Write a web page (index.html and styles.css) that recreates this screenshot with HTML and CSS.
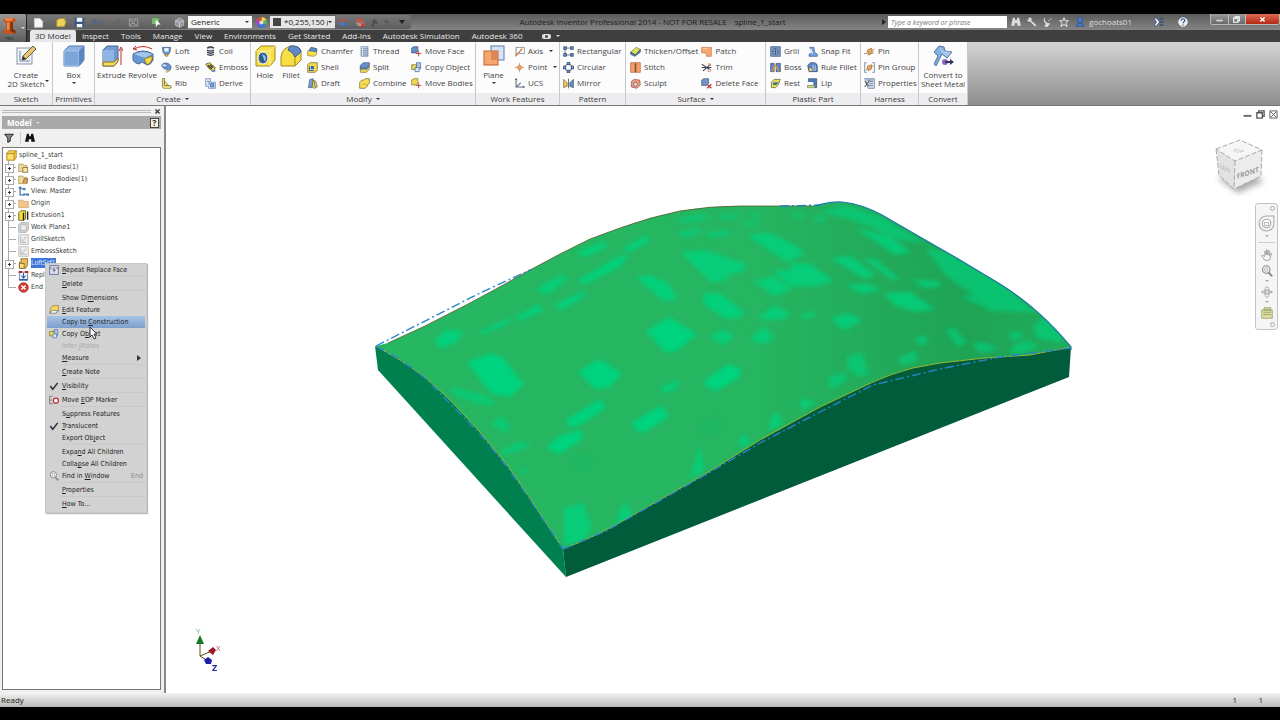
FILE: index.html
```html
<!DOCTYPE html>
<html lang="en">
<head>
<meta charset="utf-8">
<title>Autodesk Inventor Professional 2014 - spline_1_start</title>
<link rel="stylesheet" href="styles.css">
</head>
<body>
<svg class="sprite" aria-hidden="true">
  <symbol id="sketch" viewBox="0 0 22 22"><rect x="2" y="3" width="15" height="16" fill="#f1f3f8" stroke="#8995a8"/><path d="M5 16V6M5 16h10" stroke="#7382a0" fill="none"/><path d="M7 15l1-4 10-10 3 3L11 14z" fill="#e8c66c" stroke="#5f5a50"/><path d="M7 15l1-4 3 3z" fill="#333"/></symbol>
  <symbol id="box" viewBox="0 0 22 22"><path d="M1 6l5-5h15v14l-5 6H1z" fill="#8fb4e2" stroke="#5878a8"/><path d="M1 6h15v15H1z" fill="#7ea5d8" stroke="#a9c6ec"/><path d="M16 6l5-5v14l-5 6z" fill="#5c86bf"/></symbol>
  <symbol id="extrude" viewBox="0 0 22 22"><path d="M2 5l4-4h11v15l-4 5H2z" fill="#6f9bd2" stroke="#4b6690"/><path d="M2 5h11v12H2z" fill="#8fb5e4"/><path d="M2 17h11l4-4v3l-4 5H2z" fill="#f5dc4e" stroke="#877530"/><path d="M20 20V4M18 6l2-4 2 4" stroke="#c52d2d" fill="none"/></symbol>
  <symbol id="revolve" viewBox="0 0 22 22"><path d="M1 9q10-6 20 0v6q-2 5-6 5l-5-3-3 2q-5-1-6-4z" fill="#6896d1" stroke="#4a6791"/><path d="M2 9q9-4 18 0l-7 4z" fill="#a4c5ee"/><path d="M12 14l8-3v4q-2 4-5 5z" fill="#f5dc4e" stroke="#877530"/><path d="M2 4q9-5 18 0M4 1L1 4l4 1" stroke="#c52d2d" fill="none"/></symbol>
  <symbol id="hole" viewBox="0 0 22 22"><path d="M2 6l5-5h14v14l-5 6H2z" fill="#f8de45" stroke="#a08724"/><path d="M2 6h14l5-5M16 6v15" stroke="#fff3a0" fill="none"/><ellipse cx="9" cy="13" rx="5" ry="6" fill="#315d8f" stroke="#fff"/><path d="M8 9q6 2 3 8" fill="#93c4e8"/></symbol>
  <symbol id="fillet" viewBox="0 0 22 22"><path d="M1 21V12Q2 3 11 1q9 0 10 5v9l-6 6z" fill="#f8de45" stroke="#a08724"/><path d="M10 1q10-1 11 6l-6 5Q13 7 8 5z" fill="#5c8bc8" stroke="#39608f"/><path d="M15 12v9" stroke="#a08724"/></symbol>
  <symbol id="plane" viewBox="0 0 22 22"><rect x="8" y="1" width="13" height="14" fill="#d7e4f7" stroke="#5d7cab"/><rect x="1" y="6" width="14" height="14" fill="#f6a66f" stroke="#bd6431"/><path d="M8 6h7v9H8z" fill="#dd8557"/></symbol>
  <symbol id="convert" viewBox="0 0 22 22"><path d="M2 7L7 1l5 1 1 4 7 1-5 6-5-4-6 12-2-2 4-8z" fill="#85b0de" stroke="#52769f"/><path d="M7 2l5 4 7 1-4 5-5-4z" fill="#a8c9ea"/><circle cx="13" cy="17" r="3" fill="#8969c2"/><path d="M13 16h5v-2l4 3-4 3v-2h-5z" fill="#333762"/></symbol>

  <symbol id="loft" viewBox="0 0 16 16"><path d="M2 2h12l-1 7-4 5H7L3 9z" fill="#6b97d2" stroke="#34527f"/><path d="M5 3h6v5H5z" fill="#eff4fb"/><path d="M5 12h6l-2 3H7z" fill="#f2d648" stroke="#7e6b22"/></symbol>
  <symbol id="sweep" viewBox="0 0 16 16"><path d="M1 5q4-6 11-2 5 4 1 9l-5 3 1-5Q4 12 1 5z" fill="#6b95d0" stroke="#3d5f92"/><ellipse cx="5" cy="5" rx="4" ry="2.500" fill="#c4daf5" stroke="#3d5f92"/><path d="M7 15l4-3" stroke="#e8cb43" stroke-width="2"/></symbol>
  <symbol id="rib" viewBox="0 0 16 16"><path d="M2 1l3-1v9l4 2h5l1 3-4 2H5l-3-3z" fill="#eedd7c" stroke="#6d6137"/><path d="M5 4l6 7H5z" fill="#f8e95a" stroke="#6d6137"/></symbol>
  <symbol id="coil" viewBox="0 0 16 16"><path d="M3 3q5-3 10 0M3 6q5 3 10 0M3 9q5 3 10 0M3 12q5 3 10 0" fill="none" stroke="#343a43" stroke-width="2"/><path d="M3 3q5 3 10 0" fill="none" stroke="#8f98a5"/></symbol>
  <symbol id="emboss" viewBox="0 0 16 16"><path d="M1 3l6-2 8 7-3 6-7-5z" fill="#e8cf50" stroke="#555035"/><path d="M4 5l6 5M7 4l5 4" stroke="#333" stroke-width="2"/><path d="M9 14h6v-4" fill="#5d86c0"/></symbol>
  <symbol id="derive" viewBox="0 0 16 16"><path d="M1 1h7v5h7v9H5v-3H1z" fill="#dfeafa" stroke="#527bb0"/><path d="M8 8h5v5H8z" fill="#7ba4da" stroke="#3d659f"/><path d="M3 5h3v5" fill="none" stroke="#385f9b"/></symbol>
  <symbol id="chamfer" viewBox="0 0 16 16"><path d="M1 14V8l5-6 8 2v8l-4 3z" fill="#f7dd4b" stroke="#8d7826"/><path d="M6 2l8 2v4L3 7z" fill="#588dce" stroke="#335b90"/></symbol>
  <symbol id="shell" viewBox="0 0 16 16"><path d="M1 4l3-3h11v11l-3 3H1z" fill="#f1d94c" stroke="#665f29"/><path d="M3 6h7v7H3z" fill="#346097"/><path d="M5 6v5h5" fill="none" stroke="#fff"/></symbol>
  <symbol id="draft" viewBox="0 0 16 16"><path d="M2 14L4 2l5-1-2 13z" fill="#779ed6" stroke="#465d85"/><path d="M8 14V3l5 2 2 8-4 2z" fill="#ead567" stroke="#746836"/><path d="M10 3l2 11" stroke="#365882"/></symbol>
  <symbol id="thread" viewBox="0 0 16 16"><path d="M3 1h10v14H3z" fill="#cad6e8" stroke="#6980a4"/><path d="M3 4h10M3 7h10M3 10h10M3 13h10" stroke="#526c95"/><path d="M5 1v14" stroke="#fff"/></symbol>
  <symbol id="split" viewBox="0 0 16 16"><path d="M2 6l4-4h9v8l-4 5H2z" fill="#f1d953" stroke="#807032"/><path d="M2 5l4-4h9v3l-4 4H2z" fill="#6492d1" stroke="#3e609a"/><path d="M1 10h10l4-4" stroke="#3e609a" stroke-width="1.500" fill="none"/></symbol>
  <symbol id="combine" viewBox="0 0 16 16"><path d="M1 6l3-3h3l2-2h6v7l-3 2v2l-3 3H1z" fill="#f6de52" stroke="#6f622c"/><path d="M5 9h6" stroke="#ad9330"/></symbol>
  <symbol id="moveface" viewBox="0 0 16 16"><path d="M1 3l3-2h6v7l-3 2H1z" fill="#628ec7" stroke="#365078"/><path d="M11 7v8M7 11h8" stroke="#c54b4b" stroke-width="1.500"/></symbol>
  <symbol id="copyobj" viewBox="0 0 16 16"><path d="M8 1h6v9H8z" fill="#a9c5ea" stroke="#42679c"/><path d="M1 4h7v7H1z" fill="#f1da4e" stroke="#6f632b"/><path d="M6 8h6v6H6z" fill="#d9e7fa" stroke="#42679c"/></symbol>
  <symbol id="movebody" viewBox="0 0 16 16"><path d="M1 3l3-2h6v7l-3 2H1z" fill="#f1d84e" stroke="#7d6c29"/><path d="M11 7v8M7 11h8" stroke="#b55a4b" stroke-width="1.500"/></symbol>
  <symbol id="axis" viewBox="0 0 16 16"><path d="M3 2h12v9H5" fill="#fff" stroke="#66758c"/><path d="M2 15L12 4" stroke="#d48045" stroke-width="2"/><path d="M3 2v11" stroke="#555"/></symbol>
  <symbol id="point" viewBox="0 0 16 16"><path d="M8 1v14M1 8h14" stroke="#dd9159"/><path d="M8 4l4 4-4 4-4-4z" fill="#efa366" stroke="#b9662e"/></symbol>
  <symbol id="ucs" viewBox="0 0 16 16"><path d="M3 1v12h12M3 13l7-6" fill="none" stroke="#59677f" stroke-width="1.5"/><path d="M1 3l2-3 2 3M13 11l3 2-3 2" fill="#59677f"/></symbol>
  <symbol id="rect" viewBox="0 0 16 16"><path d="M3 3h10M3 3v10h10" fill="none" stroke="#444"/><path d="M1 1h4v4H1zM11 1h4v4h-4zM1 11h4v4H1zM11 11h4v4h-4z" fill="#6791ca" stroke="#293f63"/></symbol>
  <symbol id="circ" viewBox="0 0 16 16"><circle cx="8" cy="8" r="5" fill="none" stroke="#333"/><path d="M6 0h4v4H6zM0 6h4v4H0zM12 6h4v4h-4zM6 12h4v4H6z" fill="#6791ca" stroke="#293f63"/></symbol>
  <symbol id="mirror" viewBox="0 0 16 16"><path d="M1 2l5 5v5l-5 2z" fill="#e9c85d" stroke="#7a6435"/><path d="M15 2l-5 5v5l5 2z" fill="#6791ca" stroke="#2d486f"/><path d="M8 1v14" stroke="#333"/></symbol>
  <symbol id="thicken" viewBox="0 0 16 16"><path d="M1 9l8-7 6 3-7 8z" fill="#dde35c" stroke="#656e27"/><path d="M1 9l7 4 7-8v4l-8 6-6-3z" fill="#557fb2" stroke="#344c70"/></symbol>
  <symbol id="stitch" viewBox="0 0 16 16"><path d="M1 1h14v14H1z" fill="#f4a06b" stroke="#b65f34"/><path d="M8 1v14" stroke="#79411f"/><path d="M6 4h4M6 7h4M6 10h4M6 13h4" stroke="#79411f"/></symbol>
  <symbol id="sculpt" viewBox="0 0 16 16"><path d="M2 5l4-3 8 1 1 7-5 5-8-2z" fill="#ef9d7d" stroke="#9b473c"/><circle cx="8" cy="9" r="3" fill="#f8d3bd" stroke="#4b5d7c"/></symbol>
  <symbol id="patch" viewBox="0 0 16 16"><path d="M1 2h14v13H8q1-6-7-5z" fill="#f5a873" stroke="#c9743f"/><path d="M3 4h7" stroke="#ffe0c8"/></symbol>
  <symbol id="trim" viewBox="0 0 16 16"><path d="M1 3l13 9M3 13L14 3M1 8h14" stroke="#38404d" stroke-width="1.5"/><circle cx="12" cy="12" r="2" fill="#fff" stroke="#b54b36"/><path d="M9 2h5v4" fill="#e39560"/></symbol>
  <symbol id="delface" viewBox="0 0 16 16"><path d="M1 3l3-2h7v7l-3 3H1z" fill="#6f94c6" stroke="#405b87"/><path d="M9 9l6 6M15 9l-6 6" stroke="#c13a3a" stroke-width="2"/></symbol>
  <symbol id="grill" viewBox="0 0 16 16"><path d="M1 1h14v14H1z" fill="#7898c8" stroke="#385184"/><circle cx="8" cy="8" r="4" fill="#a2b7d8" stroke="#303d6b"/><path d="M5 8h6M8 4v8" stroke="#303d6b"/></symbol>
  <symbol id="boss" viewBox="0 0 16 16"><path d="M1 2h5v12H1zM9 2h6v12H9z" fill="#5d8bc9" stroke="#2d466b"/><path d="M3 14L7 4l3 4 3 6" fill="none" stroke="#d59b47" stroke-width="2"/></symbol>
  <symbol id="rest" viewBox="0 0 16 16"><path d="M2 6l4-4h9l-3 8-4 4H2z" fill="#e6df4d" stroke="#525d31"/><path d="M5 6h8l-4 4H4z" fill="#426fa4"/></symbol>
  <symbol id="snap" viewBox="0 0 16 16"><path d="M4 2h6l1 7 4 3v3H3v-3l4-2z" fill="#71a2df" stroke="#355987"/><path d="M5 4l3 7" stroke="#e6f2ff" stroke-width="2"/></symbol>
  <symbol id="rule" viewBox="0 0 16 16"><path d="M1 5l4-4h6q4 1 4 6v7H3z" fill="#5c88c5" stroke="#2d466b"/><path d="M3 13V8q4-1 5 5" fill="#f3e072" stroke="#665f29"/><path d="M9 4v9M12 5v8" stroke="#d8e5f7"/></symbol>
  <symbol id="lip" viewBox="0 0 16 16"><path d="M2 1h12v13H1v-3h9V5H2z" fill="#4c7dbf" stroke="#294a79"/><path d="M1 11h10v3H1z" fill="#d9db65"/></symbol>
  <symbol id="pin" viewBox="0 0 16 16"><path d="M0 11h4l3-6M10 10l5-6M5 13l9-3" fill="none" stroke="#77654e"/><path d="M5 6l6-3 1 6-5 4z" fill="#efa552" stroke="#a36d34"/></symbol>
  <symbol id="pingroup" viewBox="0 0 16 16"><path d="M4 1H1v14h3M12 1h3v14h-3" fill="none" stroke="#46628e"/><path d="M3 12l3-5M9 11l4-6" fill="none" stroke="#77654e"/><path d="M5 6l6-2v6l-5 3z" fill="#efa552" stroke="#a36d34"/></symbol>
  <symbol id="props" viewBox="0 0 16 16"><path d="M1 1h14v14H6z" fill="#d7e2f1" stroke="#506b94"/><path d="M4 3h9M6 5h7M8 8h5M8 11h5" stroke="#506b94"/><path d="M1 5l7 7M1 13l7-9" stroke="#5c5a57" stroke-width="1.500"/></symbol>

  <symbol id="new" viewBox="0 0 16 16"><path d="M2 2h8l4 4v9H2z" fill="#f5f5f5" stroke="#cfcfcf"/></symbol>
  <symbol id="open" viewBox="0 0 16 16"><path d="M1 5l4-3h8v4h2l-3 8H1z" fill="#ecd258" stroke="#aa8d2b"/></symbol>
  <symbol id="save" viewBox="0 0 16 16"><path d="M1 1h14v14H1z" fill="#3e587f"/><path d="M4 1h8v6H4zM4 10h8v5H4z" fill="#f2f6fb"/></symbol>
  <symbol id="undo" viewBox="0 0 16 16"><path d="M5 3L1 7l4 4M1 7h9q4 1 4 5" fill="none" stroke="#4e6581" stroke-width="2"/></symbol>
  <symbol id="redo" viewBox="0 0 16 16"><path d="M11 3l4 4-4 4M15 7H6q-4 1-4 5" fill="none" stroke="#666" stroke-width="2"/></symbol>
  <symbol id="update" viewBox="0 0 16 16"><path d="M2 3l11 10M3 12l9-9M2 3h12v10H2z" stroke="#9a9a9a" fill="none" stroke-width="1.500"/></symbol>
  <symbol id="select" viewBox="0 0 16 16"><path d="M1 1h11v10H1z" fill="#82b87c" stroke="#467940"/><path d="M7 4l7 7h-4l-3 4z" fill="#fff"/></symbol>
  <symbol id="cube" viewBox="0 0 16 16"><path d="M2 5l6-4 6 4v7l-6 3-6-3z" fill="#999" stroke="#ccc"/><path d="M2 5l6 3 6-3M8 8v7" stroke="#ddd" fill="none"/></symbol>
  <symbol id="wheel" viewBox="0 0 16 16"><path d="M8 8V0a8 8 0 0 1 7 4z" fill="#f4d34a"/><path d="M8 8l7-4a8 8 0 0 1 0 8z" fill="#63b64d"/><path d="M8 8l7 4a8 8 0 0 1-14 0z" fill="#4271cf"/><path d="M8 8l-7 4a8 8 0 0 1 0-8z" fill="#9d4fc2"/><path d="M8 8L1 4a8 8 0 0 1 7-4z" fill="#dc4c35"/><circle cx="8" cy="8" r="3" fill="#ddd"/></symbol>
  <symbol id="ball" viewBox="0 0 16 16"><path d="M1 7a6 5 0 0 1 12 0z" fill="#a4585b"/><path d="M1 8h12a6 5 0 0 1-12 0z" fill="#5276b8"/><path d="M9 9l6 6" stroke="#4b6aa6" stroke-width="2.500"/></symbol>
  <symbol id="ball2" viewBox="0 0 16 16"><path d="M1 7a5 5 0 0 1 11 0z" fill="#c25443"/><path d="M1 8h13v5H4z" fill="#b98f84"/><path d="M9 9l5 5M14 9l-5 5" stroke="#c33" stroke-width="2"/></symbol>
  <symbol id="binoc" viewBox="0 0 16 16"><path d="M3 1h3l1 4h2l1-4h3l3 13h-6v-4H6v4H0z" fill="currentColor"/></symbol>
  <symbol id="key" viewBox="0 0 16 16"><path d="M2 1h5v5l8 7-2 2-8-8H1V3l3 2z" fill="#e4e4e4"/></symbol>
  <symbol id="dish" viewBox="0 0 16 16"><path d="M2 2q0 8 9 9l-3 2v2H3l2-4Q1 8 2 2zM8 7l6-5" fill="#e4e4e4" stroke="#e4e4e4"/></symbol>
  <symbol id="star" viewBox="0 0 16 16"><path d="M8 1l2 5h5l-4 4 2 5-5-3-5 3 2-5-4-4h5z" fill="#777" stroke="#f1f1f1" stroke-width="1.5"/></symbol>
  <symbol id="user" viewBox="0 0 16 16"><path d="M4 1h8v8H4zM1 15l3-5h8l3 5z" fill="#4d78bc" stroke="#274f91"/></symbol>
  <symbol id="xchange" viewBox="0 0 16 16"><path d="M0 2h4l5 6-5 6H0l4-6z" fill="#eef3fb" stroke="#284779"/><path d="M15 3H9M15 8H9M15 13H9" stroke="#284779" stroke-width="2"/></symbol>
  <symbol id="help" viewBox="0 0 16 16"><circle cx="8" cy="8" r="7" fill="#e6eef8" stroke="#fff"/><path d="M5 6q0-3 3-3t3 3q0 1-2 2l-1 2M8 12v2" stroke="#3e5e91" stroke-width="2" fill="none"/></symbol>
  <symbol id="inventor" viewBox="0 0 20 20"><path d="M3 1h14v4l-3 1v8l3 1v4H3v-4l3-1V6L3 5z" fill="#c9511b"/><path d="M3 1h12l-3 3H6zM7 6l3-1v9l-3 1z" fill="#f08744"/><path d="M11 5l3 1v8l3 1v4l-6-3z" fill="#7e2e0c"/></symbol>

  <symbol id="part" viewBox="0 0 16 16"><path d="M1 5l3-4h11v10l-3 4H1z" fill="#f4cf43" stroke="#a3751b"/><path d="M1 5h11v10M12 5l3-4" fill="none" stroke="#a3751b"/><path d="M3 7h7v6H3z" fill="#fbe482"/></symbol>
  <symbol id="bodies" viewBox="0 0 16 16"><path d="M1 3h6l1 2h5v9H1z" fill="#efd89b" stroke="#a68c51"/><path d="M7 8h7v7H7z" fill="#f5e9a1" stroke="#665930"/></symbol>
  <symbol id="surfs" viewBox="0 0 16 16"><path d="M1 3h6l1 2h5v9H1z" fill="#efd89b" stroke="#a68c51"/><path d="M7 13l2-6h5l-1 7" fill="#e1a15b" stroke="#665930"/></symbol>
  <symbol id="view" viewBox="0 0 16 16"><path d="M3 1v12h4M3 4h4M9 12h4" fill="none" stroke="#315a91" stroke-width="1.5"/><path d="M1 1h4v3H1zM7 3h4v3H7zM7 11h3v3H7zM12 11h4v3h-4z" fill="#4e7fc2"/></symbol>
  <symbol id="folder" viewBox="0 0 16 16"><path d="M1 3h6l1 2h7v9H1z" fill="#efc68f" stroke="#cda067"/></symbol>
  <symbol id="extr" viewBox="0 0 16 16"><path d="M1 4l3-3h7v12l-3 2H1z" fill="#f4e032" stroke="#3f3915"/><path d="M8 4v11M14 2v12" stroke="#222" stroke-width="2"/></symbol>
  <symbol id="wplane" viewBox="0 0 16 16"><path d="M1 4l3-3h11v10l-3 4H1z" fill="#d8d8d8" stroke="#989898"/><path d="M4 4h8v8H4z" fill="#eee" stroke="#aaa"/></symbol>
  <symbol id="sk" viewBox="0 0 16 16"><path d="M1 1h14v14H1z" fill="#eee" stroke="#aaa"/><path d="M4 4v8h8M6 11l6-7" fill="none" stroke="#999"/></symbol>
  <symbol id="loftsrf" viewBox="0 0 16 16"><path d="M4 1h10v9l-3 5H2V6h3z" fill="#edba52" stroke="#715020"/><path d="M2 8h7v7H2z" fill="#f8de78" stroke="#715020"/></symbol>
  <symbol id="replace" viewBox="0 0 16 16"><path d="M2 3h12v12H2z" fill="#eef3fb" stroke="#345b98"/><path d="M1 3h5M10 3h5" stroke="#b22" stroke-width="3"/><path d="M8 4v7M5 8l3 4 3-4M2 14h12" fill="none" stroke="#345b98" stroke-width="1.5"/></symbol>
  <symbol id="repeat" viewBox="0 0 16 16"><path d="M1 1h14v14H1z" fill="#e4e2ea" stroke="#6570a4" stroke-width="1.500"/><path d="M8 4v8M5 8h6M1 5h4M11 5h4" stroke="#5d6490" stroke-width="1.500"/><path d="M7 4h3" stroke="#c5a73f" stroke-width="2"/></symbol>
  <symbol id="eop" viewBox="0 0 16 16"><circle cx="8" cy="8" r="7" fill="#d63d38" stroke="#8f2725"/><path d="M5 5l6 6M11 5l-6 6" stroke="#fff" stroke-width="2"/></symbol>
  <symbol id="funnel" viewBox="0 0 16 16"><path d="M1 2h14l-5 6v5l-4 2V8z" fill="#888" stroke="#222" stroke-width="1.5"/></symbol>
  <symbol id="edit" viewBox="0 0 16 16"><path d="M3 5l3-4h9v9l-4 3H1z" fill="#f3d758" stroke="#86702a"/><path d="M1 13l4-4h9l-3 4z" fill="#fff" stroke="#486a9d"/></symbol>
  <symbol id="eopmove" viewBox="0 0 16 16"><path d="M6 2H1v12h5M1 8h4" fill="none" stroke="#555"/><circle cx="11" cy="9" r="4" fill="#fff" stroke="#b83030" stroke-width="2"/></symbol>
  <symbol id="mag" viewBox="0 0 16 16"><circle cx="7" cy="6" r="5" fill="#f6f6f6" stroke="#888" stroke-width="1.5"/><path d="M10 10l5 5" stroke="#888" stroke-width="2.5"/><path d="M5 4h4v4H5z" fill="none" stroke="#aaa"/></symbol>
  <symbol id="check" viewBox="0 0 16 16"><path d="M2 8l4 5L14 3" fill="none" stroke="#333" stroke-width="2.5"/></symbol>
  <symbol id="hand" viewBox="0 0 16 16"><path d="M5 15L1 9l1-1 3 2V3h1l1 5V1h1l1 7 1-6h1v7l2-4 1 1-2 7-1 2z" fill="#f6f6f6" stroke="#8c8c8c"/></symbol>
  <symbol id="orbit" viewBox="0 0 16 16"><ellipse cx="8" cy="8" rx="3" ry="7" fill="none" stroke="#999"/><circle cx="8" cy="8" r="3" fill="#ddd" stroke="#888"/><path d="M1 8h3M12 8h3M3 6L1 8l2 2M13 6l2 2-2 2" fill="none" stroke="#888"/></symbol>
  <symbol id="look" viewBox="0 0 16 16"><path d="M1 4h14v11H1zM4 1h9v3H4z" fill="#dce0a2" stroke="#909562"/><path d="M3 7h10M3 10h10" stroke="#909562"/></symbol>
  <symbol id="steer" viewBox="0 0 16 16"><path d="M8 1h7v7a7 7 0 1 1-7-7z" fill="#f4f4f4" stroke="#aaa"/><circle cx="8" cy="8" r="4" fill="#fff" stroke="#aaa"/><path d="M6 7h4v3H6z" fill="none" stroke="#bbb"/></symbol>
  <symbol id="min" viewBox="0 0 10 10"><path d="M1 6h8v1H1z" fill="none" stroke="currentColor"/></symbol>
  <symbol id="restore" viewBox="0 0 10 10"><path d="M3 3V1h6v6H7M1 3h6v6H1z" fill="none" stroke="currentColor" stroke-width="1.5"/></symbol>
  <symbol id="close" viewBox="0 0 10 10"><path d="M2 2l6 6M8 2L2 8" stroke="currentColor" stroke-width="2"/></symbol>
  <symbol id="closebox" viewBox="0 0 10 10"><path d="M1 1h8v8H1zM2 2l6 6M8 2L2 8" fill="none" stroke="currentColor"/></symbol>
</svg>

<div class="app">
  <header class="top">
    <button class="appmenu" aria-label="Application menu"><span class="applogo"><svg><use href="#inventor"/></svg><small>PRO</small></span><i class="caret light"></i></button>
    <div class="topmain">
      <div class="titlebar">
        <div class="qat">
          <button aria-label="New"><svg><use href="#new"/></svg></button>
          <button class="gap" aria-label="Open"><svg><use href="#open"/></svg></button>
          <button aria-label="Save"><svg><use href="#save"/></svg></button>
          <button aria-label="Undo"><svg><use href="#undo"/></svg></button>
          <button aria-label="Redo"><svg><use href="#redo"/></svg></button>
          <button aria-label="Update"><svg><use href="#update"/></svg></button>
          <button class="gap" aria-label="Select"><svg><use href="#select"/></svg></button>
          <button class="gap" aria-label="Material"><svg><use href="#cube"/></svg></button>
        </div>
        <span class="pick generic"><select aria-label="Material"><option>Generic</option></select><i class="caret"></i></span>
        <button class="wheel" aria-label="Appearance"><svg><use href="#wheel"/></svg></button>
        <span class="pick color"><i class="swatch"></i><select aria-label="Appearance"><option>*0,255,150 (</option></select><i class="caret"></i></span>
        <div class="qat after">
          <button aria-label="Adjust"><svg><use href="#ball"/></svg></button>
          <button aria-label="Clear"><svg><use href="#ball2"/></svg></button>
          <button class="fx" aria-label="Parameters">f<sub>x</sub></button>
          <button class="plus" aria-label="Add">+</button>
          <button aria-label="Customize"><i class="caret dark"></i></button>
        </div>
        <div class="doc"><span>Autodesk Inventor Professional 2014 - NOT FOR RESALE</span><span>spline_1_start</span></div>
        <i class="play"></i>
        <input class="search" type="text" aria-label="Search" placeholder="Type a keyword or phrase">
        <div class="account">
          <button aria-label="Search"><svg><use href="#binoc"/></svg></button>
          <button aria-label="Subscription"><svg><use href="#key"/></svg></button>
          <button aria-label="Communication"><svg><use href="#dish"/></svg></button>
          <button aria-label="Favorites"><svg><use href="#star"/></svg></button>
          <button class="name"><svg><use href="#user"/></svg>gochoats01</button>
          <button aria-label="Exchange"><svg><use href="#xchange"/></svg></button>
          <button aria-label="Help"><svg><use href="#help"/></svg></button>
        </div>
        <div class="winbtns">
          <button aria-label="Minimize"><svg><use href="#min"/></svg></button>
          <button aria-label="Restore"><svg><use href="#restore"/></svg></button>
          <button class="red" aria-label="Close"><svg><use href="#close"/></svg></button>
        </div>
      </div>
      <nav class="tabs">
        <button class="on">3D Model</button><button>Inspect</button><button>Tools</button><button>Manage</button><button>View</button><button>Environments</button><button>Get Started</button><button>Add-Ins</button><button>Autodesk Simulation</button><button>Autodesk 360</button>
        <button class="pill" aria-label="Ribbon display"><i></i><i class="caret light"></i></button>
      </nav>
    </div>
  </header>

  <section class="ribbon">
    <div class="panel p-sketch"><div class="tools">
      <button class="big"><svg><use href="#sketch"/></svg><span>Create<br>2D Sketch</span><i class="caret side-caret"></i></button>
    </div><h2>Sketch</h2></div>
    <div class="panel p-prim"><div class="tools">
      <button class="big"><svg><use href="#box"/></svg><span>Box</span><i class="caret"></i></button>
    </div><h2>Primitives</h2></div>
    <div class="panel p-create"><div class="tools">
      <button class="big"><svg><use href="#extrude"/></svg><span>Extrude</span></button>
      <button class="big"><svg><use href="#revolve"/></svg><span>Revolve</span></button>
      <div class="col"><button><svg><use href="#loft"/></svg>Loft</button><button><svg><use href="#sweep"/></svg>Sweep</button><button><svg><use href="#rib"/></svg>Rib</button></div>
      <div class="col"><button><svg><use href="#coil"/></svg>Coil</button><button><svg><use href="#emboss"/></svg>Emboss</button><button><svg><use href="#derive"/></svg>Derive</button></div>
    </div><h2>Create <i class="caret"></i></h2></div>
    <div class="panel p-modify"><div class="tools">
      <button class="big"><svg><use href="#hole"/></svg><span>Hole</span></button>
      <button class="big"><svg><use href="#fillet"/></svg><span>Fillet</span></button>
      <div class="col"><button><svg><use href="#chamfer"/></svg>Chamfer</button><button><svg><use href="#shell"/></svg>Shell</button><button><svg><use href="#draft"/></svg>Draft</button></div>
      <div class="col"><button><svg><use href="#thread"/></svg>Thread</button><button><svg><use href="#split"/></svg>Split</button><button><svg><use href="#combine"/></svg>Combine</button></div>
      <div class="col"><button><svg><use href="#moveface"/></svg>Move Face</button><button><svg><use href="#copyobj"/></svg>Copy Object</button><button><svg><use href="#movebody"/></svg>Move Bodies</button></div>
    </div><h2>Modify <i class="caret"></i></h2></div>
    <div class="panel p-work"><div class="tools">
      <button class="big"><svg><use href="#plane"/></svg><span>Plane</span><i class="caret"></i></button>
      <div class="col"><button><svg><use href="#axis"/></svg>Axis<i class="caret"></i></button><button><svg><use href="#point"/></svg>Point<i class="caret"></i></button><button><svg><use href="#ucs"/></svg>UCS</button></div>
    </div><h2>Work Features</h2></div>
    <div class="panel p-pattern"><div class="tools">
      <div class="col"><button><svg><use href="#rect"/></svg>Rectangular</button><button><svg><use href="#circ"/></svg>Circular</button><button><svg><use href="#mirror"/></svg>Mirror</button></div>
    </div><h2>Pattern</h2></div>
    <div class="panel p-surface"><div class="tools">
      <div class="col"><button><svg><use href="#thicken"/></svg>Thicken/Offset</button><button><svg><use href="#stitch"/></svg>Stitch</button><button><svg><use href="#sculpt"/></svg>Sculpt</button></div>
      <div class="col"><button><svg><use href="#patch"/></svg>Patch</button><button><svg><use href="#trim"/></svg>Trim</button><button><svg><use href="#delface"/></svg>Delete Face</button></div>
    </div><h2>Surface <i class="caret"></i></h2></div>
    <div class="panel p-plastic"><div class="tools">
      <div class="col"><button><svg><use href="#grill"/></svg>Grill</button><button><svg><use href="#boss"/></svg>Boss</button><button><svg><use href="#rest"/></svg>Rest</button></div>
      <div class="col"><button><svg><use href="#snap"/></svg>Snap Fit</button><button><svg><use href="#rule"/></svg>Rule Fillet</button><button><svg><use href="#lip"/></svg>Lip</button></div>
    </div><h2>Plastic Part</h2></div>
    <div class="panel p-harness"><div class="tools">
      <div class="col"><button><svg><use href="#pin"/></svg>Pin</button><button><svg><use href="#pingroup"/></svg>Pin Group</button><button><svg><use href="#props"/></svg>Properties</button></div>
    </div><h2>Harness</h2></div>
    <div class="panel p-convert"><div class="tools">
      <button class="big"><svg><use href="#convert"/></svg><span>Convert to<br>Sheet Metal</span></button>
    </div><h2>Convert</h2></div>
  </section>

  <main class="work">
    <aside class="browser">
      <div class="grip"><span></span><button aria-label="Close panel"><svg><use href="#close"/></svg></button></div>
      <div class="bhead"><button>Model <i class="caret light"></i></button><button class="q" aria-label="Help">?</button></div>
      <div class="btools"><button aria-label="Filter"><svg><use href="#funnel"/></svg></button><button aria-label="Find"><svg><use href="#binoc"/></svg></button></div>
      <div class="treebox">
        <div class="root"><svg><use href="#part"/></svg>spline_1_start</div>
        <ul class="tree">
          <li class="ex"><svg><use href="#bodies"/></svg>Solid Bodies(1)</li>
          <li class="ex"><svg><use href="#surfs"/></svg>Surface Bodies(1)</li>
          <li class="ex"><svg><use href="#view"/></svg>View: Master</li>
          <li class="ex"><svg><use href="#folder"/></svg>Origin</li>
          <li class="ex"><svg><use href="#extr"/></svg>Extrusion1</li>
          <li><svg><use href="#wplane"/></svg>Work Plane1</li>
          <li><svg><use href="#sk"/></svg>GrillSketch</li>
          <li><svg><use href="#sk"/></svg>EmbossSketch</li>
          <li class="ex"><svg><use href="#loftsrf"/></svg><mark>LoftSrf1</mark></li>
          <li><svg><use href="#replace"/></svg>Repl</li>
          <li><svg><use href="#eop"/></svg>End o</li>
        </ul>
      </div>
    </aside>

    <section class="viewport">
      <svg class="scene" viewBox="166 106 1114 587" role="img" aria-label="Lofted part">
        <defs>
          <clipPath id="topclip"><path id="topshape" d="M376 346L388 343L425 326L470 303Q500 287 530 270L560 254L590 239L620 228Q650 217 680 211Q710 206 740 206L775 206L815 206Q832 202 842 202Q862 204 882 215L920 237L960 260L1000 284Q1040 309 1071 347L1030 355L985 358L940 363L913 368Q890 374 873 382L820 407L760 440L707 473L633 515Q600 535 563 549L530 498L508 466L480 432L450 400L425 377L400 360Z"/></clipPath>
          <linearGradient id="topfill" x1="0" y1="0" x2="1" y2="0"><stop offset="0" stop-color="#27b661"/><stop offset=".55" stop-color="#26b561"/><stop offset=".85" stop-color="#1fa355"/><stop offset="1" stop-color="#20ad5c"/></linearGradient>
          <filter id="soft" x="-5%" y="-5%" width="110%" height="110%"><feGaussianBlur stdDeviation="2"/></filter>
        </defs>
        <path d="M375 346L378 370L566 577L563 549L508 460L425 373Z" fill="#00804f"/>
        <path d="M563 549L566 577L1069 377L1071 347L985 350L870 370L760 430L633 508Z" fill="#005c3a"/>
        <use href="#topshape" fill="url(#topfill)"/>
        <g clip-path="url(#topclip)"><g filter="url(#soft)" fill="#00d37e">
          <path d="M646 331l23-14 28 17-20 17-12 1zM578 372l20-13 24 14-13 15-14 1zM467 362l24-9 12 5 21 26-14 13-19-4zM703 382l25-18 14 6-3 8-25 14zM566 420l34-21 6 9-28 18-9 1zM632 423l29-18 8 11-22 15-10 1zM546 448l12-11 22-7 3 9-24 15z"/>
          <path d="M660 388l20-9-4 10-12 4zM535 290l24-14 10 1-20 17zM575 253l30-12 2 6-22 10zM578 280l41-24 10-1-9 12-37 18zM555 304l32-14-4 8-24 13zM515 317l25-13 3 7-24 10zM478 332l34-15-4 7-24 10zM434 341l12-11 18 1-9 13-15 4zM622 249l25-14 3 6-20 11zM636 277l14-2 18 8 10 16-15 2zM702 294l18-1 24 19-4 6-14 1-20-13z" opacity=".9"/>
          <path d="M680 252l25-2 42 14-3 7-13 3-5 6-14 3zM747 235l22-2 26 12 10 9-18 8zM752 281l22-5 18 14-17 6zM772 270l20 0-3-7 20 0 25 18-16 5-28 1zM757 319l17-14 12 6 4 6-15 3zM709 337l14-8 12 7-12 9zM749 338l15-11 11 10-12 8zM798 316l13-5 7 5-15 2zM832 317l17-4 13 7-14 9-10-2zM830 258l21-2 24 19-10 4zM863 258l12 1 26 21-10-1zM845 284l24 0 13 5-20 5zM883 293l27-1 25 17-19 3-20-6zM912 280l27 1 2 5-16 2zM855 228l35 8 21 16-15 3z" opacity=".8"/>
          <path d="M676 232l22-4 6 4-20 6zM707 232l24-2-3 6-20 2zM670 222l28-8 15 3-20 5zM718 215l22-2-3 5-16 1zM737 223l26-3-11 6zM745 215l16-2-4 4zM785 216l20-3-2 5zM810 218l18-3-5 7zM820 211l26-6 36 12 45 27-29-5-40-17z" opacity=".65"/>
          <path d="M925 247l30 7 45 28 34 30-22-2-42-17-26-19zM960 297l28-4 30 12-8 5-22-2zM984 304l48 3 9 5-53-1zM1034 325l12-8 15 18 2 8-26-5zM1008 333l10-2 6 6-12 4zM946 330l8-2 13 14-9 5zM972 344l10-2 18 7-20 4zM1013 346l14-6 12 6-14 7-16 1zM914 339l10-4 5 7-10 4zM898 358l17-8 3 11-16 4zM846 357l16-5 7 22-10 3-11-8zM828 377l17-5 2 8-17 10z" opacity=".65"/>
          <path d="M450 387l35 8 14 11-20-2-25-9zM490 424l12-8 9 10-5 7zM500 451l18-9 14 2-10 6-20 5zM516 470l12-2-2 6z" opacity=".7"/>
          <path d="M564 508l19-5 9 25-10 14-18 3zM614 529l10-29 9 16-12 15zM690 479l10-36 4 27zM738 446l4-12 9 6-5 7zM768 429l6-17 9 7-4 8zM801 411l0-13 15 4z" opacity=".8"/>
          <path d="M568 457h26M572 464h18M575 469h14M704 436v-16M709 435v-16M714 433v-15M720 430v-12" fill="none" stroke="#00c775" stroke-width="1"/>
        </g></g>
        <path d="M388 343L425 326L470 303Q500 287 530 270L560 254L590 239L620 228Q650 217 680 211Q710 206 740 206H815" fill="none" stroke="#5a5a2a" stroke-width=".8"/>
        <path d="M563 549Q600 535 633 515L707 473L760 440L820 407L873 382Q890 374 913 368L940 363L985 358L1030 355L1071 347M376 346L400 360L425 377L450 400L480 432L508 466L530 498L563 549" fill="none" stroke="#a6bc2c" stroke-width=".9"/>
        <path d="M376 346L480 293L530 270M780 206L820 205M563 549L606 531L707 474L760 443L820 412L873 385L940 369L1000 357L1071 348M376 346L398 358L425 378L480 434L508 468L530 500L563 549" fill="none" stroke="#2686cb" stroke-width="1.4" stroke-dasharray="9 3 2 3"/>
        <path d="M815 206Q832 201 842 202Q862 204 882 215L920 237L960 260L1000 284Q1040 309 1071 347V350" fill="none" stroke="#1878a3" stroke-width="1.2"/>
        <g class="triad">
          <path d="M200 656v-18M200 656l12-5M200 656l8 5" stroke="#604b23" fill="none"/>
          <path d="M196 644l4-9 4 9z" fill="#137a1d"/><path d="M208 651l5-4 3 3-3 5z" fill="#9c1825"/><path d="M204 660l4-3 4 3-1 4h-5z" fill="#1d1fa5"/>
          <text x="196" y="634" fill="#4fb45b">Y</text><text x="216" y="651" fill="#bd4a55">X</text><text class="z" x="212" y="671" fill="#22289c">Z</text>
        </g>
      </svg>
      <div class="docbtns"><button aria-label="Minimize document"><svg><use href="#min"/></svg></button><button aria-label="Restore document"><svg><use href="#restore"/></svg></button><button aria-label="Close document"><svg><use href="#closebox"/></svg></button></div>
      <svg class="viewcube" viewBox="0 0 54 58" role="img" aria-label="View cube">
        <defs><filter id="shade"><feGaussianBlur stdDeviation="3"/></filter></defs>
        <path d="M4 40l20 15 26-12-20-12z" fill="#aaa" filter="url(#shade)"/>
        <path d="M2 11L26 2l22 10-27 11z" fill="#f6f6f6"/><path d="M2 11l19 12-1 28L5 37z" fill="#e2e2e2"/><path d="M21 23l27-11-1 26-27 13z" fill="#ececec"/>
        <path d="M2 11L26 2l22 10-27 11zM2 11l3 26 15 14 27-13 1-26M21 23l-1 28" fill="none" stroke="#a9a9a9" stroke-dasharray="5 2"/>
        <text transform="matrix(.93 -.3 .1 1 23 41)" class="front">FRONT</text><text transform="matrix(.8 .5 0 1 6 30)" class="side">LEFT</text><text transform="matrix(.9 .1 -.4 .7 18 14)" class="side">TOP</text>
      </svg>
      <div class="navbar">
        <i class="dot"></i>
        <button class="wheelbtn" aria-label="Steering wheel"><svg><use href="#steer"/></svg></button><i class="caret pale"></i>
        <hr>
        <button aria-label="Pan"><svg><use href="#hand"/></svg></button>
        <button aria-label="Zoom"><svg><use href="#mag"/></svg></button><i class="caret pale"></i>
        <button aria-label="Orbit"><svg><use href="#orbit"/></svg></button><i class="caret pale"></i>
        <button aria-label="Look at"><svg><use href="#look"/></svg></button>
        <i class="dot"></i>
      </div>
    </section>

    <div class="menu" role="menu">
      <button role="menuitem"><svg><use href="#repeat"/></svg><span><u>R</u>epeat Replace Face</span></button><hr>
      <button role="menuitem"><span><u>D</u>elete</span></button><hr>
      <button role="menuitem"><span>Show Di<u>m</u>ensions</span></button>
      <button role="menuitem"><svg><use href="#edit"/></svg><span><u>E</u>dit Feature</span></button>
      <button role="menuitem" class="hot"><span>Copy to <u>C</u>onstruction</span></button>
      <button role="menuitem"><svg><use href="#copyobj"/></svg><span>Copy O<u>b</u>ject</span></button>
      <button role="menuitem" disabled><span>Infer <u>i</u>Mates</span></button>
      <button role="menuitem"><span><u>M</u>easure</span><i class="sub"></i></button><hr>
      <button role="menuitem"><span><u>C</u>reate Note</span></button><hr>
      <button role="menuitem"><svg><use href="#check"/></svg><span><u>V</u>isibility</span></button><hr>
      <button role="menuitem"><svg><use href="#eopmove"/></svg><span>Move <u>E</u>OP Marker</span></button><hr>
      <button role="menuitem"><span>S<u>u</u>ppress Features</span></button>
      <button role="menuitem"><svg><use href="#check"/></svg><span><u>T</u>ranslucent</span></button>
      <button role="menuitem"><span>Export Ob<u>j</u>ect</span></button><hr>
      <button role="menuitem"><span>Expa<u>n</u>d All Children</span></button>
      <button role="menuitem"><span>Colla<u>p</u>se All Children</span></button>
      <button role="menuitem"><svg><use href="#mag"/></svg><span>Find in <u>W</u>indow</span><kbd>End</kbd></button><hr>
      <button role="menuitem"><span><u>P</u>roperties</span></button><hr>
      <button role="menuitem"><span><u>H</u>ow To...</span></button>
    </div>
    <svg class="cursor" viewBox="0 0 9 14" aria-hidden="true"><path d="M1 1v10l2-2 2 4 2-1-2-4h3z" fill="#fff" stroke="#333"/></svg>
  </main>

  <footer class="status"><span>Ready</span><span class="num">1</span><span class="num">1</span></footer>
</div>
</body>
</html>
```
FILE: styles.css
```css
* { box-sizing: border-box; }
body { margin: 0; background: #000; font: 8px/10px "Open Sans", "Noto Sans", sans-serif; color: #3a3a3a; }
button, input, select { font: inherit; color: inherit; background: none; border: 0; padding: 0; margin: 0; }
button { display: flex; align-items: center; justify-content: center; white-space: nowrap; }
svg { display: block; flex: none; }
.sprite { position: absolute; width: 0; height: 0; }
.app { display: flex; flex-direction: column; min-height: 100vh; padding: 14px 0 13px; }
.caret { display: inline-block; flex: none; width: 0; height: 0; border: 2px solid transparent; border-top-color: #333; border-bottom: 0; }
.caret.light { border-top-color: #ddd; }
.caret.pale { border-top-color: #aaa; }
.caret.dark { border-width: 3px; border-top: 4px solid #222; border-bottom: 0; }

.top { display: flex; background: #3f3f40; }
.appmenu { width: 27px; height: 28px; gap: 3px; border-right: 1px solid #222; border-radius: 0 2px 2px 0; background: linear-gradient(#999, #5c5c5c); }
.applogo { display: flex; flex-direction: column; align-items: center; }
.applogo svg { width: 17px; height: 20px; }
.applogo small { font-size: 4px; line-height: 5px; color: #222; }
.topmain { flex: 1; min-width: 0; }
.titlebar { display: flex; align-items: center; height: 16px; background: linear-gradient(#5b5b5b, #858585); }
.qat { display: flex; align-items: center; gap: 7px; padding-left: 6px; width: 161px; height: 14px; background: linear-gradient(#777, #5e5e5e); border-radius: 0 3px 3px 0; }
.qat svg { width: 11px; height: 11px; }
.qat .gap { margin-left: 5px; }
.qat.after { width: 76px; gap: 6px; padding-left: 3px; }
.qat .fx { font: italic 9px/10px "Liberation Serif", serif; color: #222; }
.fx sub { font-size: 6px; line-height: 6px; }
.qat .plus { color: #555; font-size: 12px; }
.qat.after button:last-child { margin-left: 3px; }
.pick { display: flex; align-items: center; height: 12px; padding: 0 3px; background: #f6f6f6; }
.pick select { flex: 1; min-width: 0; appearance: none; color: #222; }
.generic { width: 64px; }
.color { width: 65px; background: #e6e6e6; }
.swatch { width: 8px; height: 8px; margin-right: 3px; background: #444; }
.wheel { width: 18px; }
.wheel svg { width: 11px; height: 11px; }
.doc { flex: 1; display: flex; justify-content: center; gap: 8px; min-width: 0; padding-left: 14px; white-space: nowrap; color: #1d1d1d; }
.play { border: 3px solid transparent; border-left: 4px solid #222; border-right: 0; margin-left: 2px; }
.search { width: 119px; height: 12px; margin-left: 2px; padding: 0 3px; background: #fff; font-style: italic; font-size: 7px; }
.search::placeholder { color: #777; opacity: 1; }
.account { display: flex; align-items: center; gap: 6px; padding: 0 22px 0 4px; color: #ddd; }
.account svg { width: 10px; height: 10px; }
.account .name { gap: 4px; margin-right: 16px; }
.account .name + button { margin-right: 8px; }
.winbtns { display: flex; width: 70px; align-self: flex-start; border: 1px solid #bbb; border-top: 0; border-radius: 0 0 3px 3px; overflow: hidden; }
.winbtns button { flex: 1; height: 10px; color: #fff; background: linear-gradient(#9b9b9b, #696969); border-right: 1px solid #bbb; }
.winbtns .red { flex: 2; background: linear-gradient(#dd6a55, #b22a14); border-right: 0; }
.winbtns svg { width: 7px; height: 7px; }
.tabs { display: flex; align-items: stretch; height: 12px; padding-left: 3px; }
.tabs button { color: #e8e8e8; padding: 0 6px; }
.tabs .on { background: #e8e8ea; color: #333; border-radius: 2px 2px 0 0; padding: 0 5px; }
.tabs .pill { gap: 5px; padding-left: 14px; }
.pill i:first-child { width: 9px; height: 5px; border-radius: 2px; background: radial-gradient(circle, #555 1px, #ddd 2px); }

.ribbon { display: flex; background: linear-gradient(#d4d4d4, #8d8d8d); border-bottom: 1px solid #777; }
.panel { display: flex; flex-direction: column; border-right: 1px solid #c8c8cc; background: #fcfcfd; }
.panel h2 { margin: 0; height: 12px; display: flex; align-items: center; justify-content: center; gap: 4px; font-size: 8px; line-height: 10px; font-weight: 400; background: #ededef; white-space: nowrap; }
.tools { display: flex; height: 51px; padding-top: 1px; }
.tools button { color: #444; }
.big { position: relative; flex-direction: column; justify-content: flex-start; flex: none; padding-top: 2px; }
.big svg { width: 22px; height: 22px; }
.big span { line-height: 9px; margin-top: 3px; text-align: center; }
.big .caret { margin-top: 3px; }
.big .side-caret { position: absolute; right: 3px; top: 34px; }
.col { display: flex; flex-direction: column; }
.col button { height: 16px; gap: 3px; padding-left: 3px; justify-content: flex-start; }
.col svg { width: 11px; height: 11px; }
.col .caret { margin-left: 3px; }
.p-sketch { width: 53px; } .p-sketch .big { width: 52px; }
.p-prim { width: 42px; } .p-prim .big { width: 41px; }
.p-create { width: 156px; } .p-create .big { width: 31px; } .p-create .col { width: 44px; }
.p-modify { width: 225px; } .p-modify .big { width: 26px; } .p-modify .col { width: 52px; }
.p-work { width: 84px; } .p-work .big { width: 35px; }
.p-pattern { width: 66px; }
.p-surface { width: 140px; } .p-surface .col { width: 76px; }
.p-plastic { width: 95px; } .p-plastic .col { width: 37px; }
.p-harness { width: 58px; }
.p-convert { width: 49px; } .p-convert .big { width: 48px; }
.p-create .tools, .p-modify .tools, .p-surface .tools, .p-plastic .tools { padding-left: 1px; }

.work { flex: 1; display: flex; position: relative; background: #fff; }
.browser { width: 166px; display: flex; flex-direction: column; padding: 0 3px 3px 2px; background: #f0f0f0; border-right: 2px solid #888; }
.grip { display: flex; align-items: center; gap: 3px; height: 10px; }
.grip span { flex: 1; height: 3px; border: solid #bbb; border-width: 1px 0; }
.grip svg { width: 7px; height: 7px; }
.bhead { display: flex; justify-content: space-between; align-items: center; height: 13px; padding: 0 2px 0 5px; background: #a9a9a9; }
.bhead button { color: #fff; font-weight: 700; gap: 4px; }
.bhead .q { width: 9px; height: 10px; background: #f8f5df; border: 1px solid #444; color: #222; }
.btools { display: flex; align-items: center; height: 18px; padding-left: 2px; }
.btools button { width: 16px; height: 12px; justify-content: flex-start; color: #111; }
.btools button + button { border-left: 1px solid #ccc; padding-left: 4px; }
.btools svg { width: 10px; height: 10px; }
.treebox { flex: 1; background: #fff; border: 1px solid #777; padding-top: 1px; }
.treebox, .menu { font-family: "DejaVu Sans Condensed", "DejaVu Sans", sans-serif; font-size: 7px; }
.root, .tree li { display: flex; align-items: center; gap: 2px; height: 12px; white-space: nowrap; }
.root { padding-left: 3px; }
.root svg, .tree svg { width: 11px; height: 11px; }
.tree { list-style: none; margin: 0 0 0 5px; padding: 0; }
.tree li { position: relative; padding-left: 10px; background: linear-gradient(#aaa, #aaa) 0 6px / 8px 1px no-repeat, linear-gradient(#aaa, #aaa) 0 0 / 1px 100% no-repeat; }
.tree li:last-child { background-size: 8px 1px, 1px 6px; }
.tree .ex::before { content: ""; position: absolute; left: -3px; top: 3px; width: 7px; height: 7px; border: 1px solid #aaa; background: linear-gradient(#333, #333) center / 3px 1px no-repeat, linear-gradient(#333, #333) center / 1px 3px no-repeat, #fff; }
.tree mark { background: #3f76d9; color: #dce8ff; }

.viewport { flex: 1; min-width: 0; position: relative; background: #fff; }
.scene { position: absolute; inset: 0; width: 100%; height: 100%; }
.triad text { font: 8px "Open Sans", sans-serif; }
.triad .z { font-size: 9px; font-weight: 700; }
.docbtns { position: absolute; right: 2px; top: 4px; display: flex; gap: 4px; color: #555; }
.docbtns svg { width: 9px; height: 9px; }
.viewcube { position: absolute; right: 12px; top: 32px; width: 54px; height: 58px; }
.viewcube text { font-family: "Open Sans", sans-serif; fill: #aaa; }
.viewcube .front { font-size: 7px; font-weight: 700; fill: #999; }
.viewcube .side { font-size: 6px; }
.navbar { position: absolute; right: 2px; top: 97px; width: 23px; display: flex; flex-direction: column; align-items: center; gap: 3px; padding: 2px; background: #f5f5f5; border: 1px solid #c4c4c4; border-radius: 3px; }
.navbar svg { width: 12px; height: 12px; }
.navbar .wheelbtn svg { width: 17px; height: 17px; }
.navbar button { margin-top: 1px; }
.navbar .look { margin-bottom: 2px; }
.navbar hr { width: 100%; margin: 2px 0; border: 0; border-top: 1px solid #ccc; }
.dot { align-self: flex-end; width: 5px; height: 5px; border: 1px solid #aaa; border-radius: 3px; }

.menu { position: absolute; left: 45px; top: 157px; width: 102px; padding: 0 1px 2px; background: #d2d2d2; border: 1px solid #c8c8c8; box-shadow: 1px 1px 1px #bbb; }
.menu button { position: relative; width: 100%; height: 12px; padding-left: 15px; justify-content: flex-start; color: #222; line-height: 12px; }
.menu button:disabled { color: #aaa; }
.menu svg { position: absolute; left: 2px; top: 1px; width: 10px; height: 10px; }
.menu hr { height: 2px; margin: 0 0 0 14px; border: 0; border-top: 1px solid #cacaca; }
.menu .hot { background: linear-gradient(#a7c4e8, #7d9fcc); }
.menu kbd { margin-left: auto; padding-right: 2px; font: inherit; color: #888; }
.menu u { text-decoration-thickness: 1px; text-underline-offset: 1px; }
.sub { margin-left: auto; margin-right: 4px; border: 3px solid transparent; border-left: 4px solid #333; border-right: 0; }
.cursor { position: absolute; left: 89px; top: 220px; width: 9px; height: 14px; }

.status { display: flex; align-items: center; height: 14px; padding: 0 17px 0 1px; background: linear-gradient(#f2f2f2, #b8b8b8); color: #222; }
.status span:first-child { flex: 1; }
.num { width: 26px; text-align: right; }
```
